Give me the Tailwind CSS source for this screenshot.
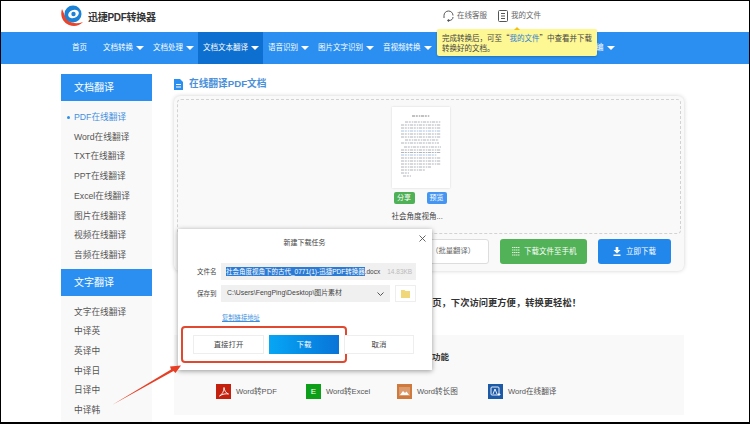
<!doctype html>
<html>
<head>
    <meta charset="UTF-8" />
    <title>迅捷PDF转换器</title>
    <script src="https://cdn.jsdelivr.net/npm/@tailwindcss/browser@4"></script>
</head>
<body class="bg-black">
<div class="relative w-[750px] h-[424px] overflow-hidden font-['Liberation_Sans','Noto_Sans_CJK_SC',sans-serif]">
<div class="absolute inset-0 border-t border-l border-r border-b-2 border-black z-50 pointer-events-none"></div>
<div class="w-[750px] h-[424px] bg-white overflow-hidden">
    <!-- header -->
    <header class="h-8 flex items-center text-[7.500px] text-[#666]">
        <svg class="ml-[61px] w-[22px] h-[22px]" viewBox="0 0 22 22">
            <path d="M1 4C-1 10 1 17 8 20c5 2 10 1 14-3-5 2-11 2-15-2C4 12 3 8 1 4z" fill="#e8452c"/>
            <circle cx="12" cy="9" r="8.500" fill="#1c82d6"/>
            <ellipse cx="12.500" cy="9" rx="5.500" ry="4" fill="#fff" transform="rotate(-20 12.500 9)"/>
            <circle cx="12.500" cy="9" r="2.200" fill="#1c82d6"/>
        </svg>
        <span class="ml-[5px] mt-[2px] w-[67px] whitespace-nowrap text-[10px] font-bold text-[#333] tracking-[-0.3px]">迅捷PDF转换器</span>
        <svg class="ml-[288px] w-[11px] h-[12px]" viewBox="0 0 11 12" fill="none" stroke="#555" stroke-width="1">
            <path d="M1 8V5.500a4.500 4.500 0 0 1 9 0M10 7c0 2-1.500 3.500-4 3.500"/>
            <circle cx="5.500" cy="10.500" r=".8" fill="#555"/>
        </svg>
        <span class="ml-[3px]">在线客服</span>
        <svg class="ml-[11px] w-[10px] h-[12px]" viewBox="0 0 10 12" fill="none" stroke="#555" stroke-width="1">
            <rect x=".5" y=".5" width="9" height="11" rx="1"/>
            <path d="M3 3.500h4M3 6h4M3 8.500h4"/>
        </svg>
        <span class="ml-[3px]">我的文件</span>
    </header>

    <!-- nav -->
    <nav class="h-8 bg-[#2a8ff0] flex items-stretch pl-[61px] text-[7.500px] text-white">
        <a class="w-[37px] flex items-center justify-center">首页</a>
        <a class="w-[50px] flex items-center pl-[5px] gap-[3px]">文档转换<i class="w-0 h-0 border-x-[4px] border-x-transparent border-t-[4px] border-t-white"></i></a>
        <a class="w-[50px] flex items-center pl-[5px] gap-[3px]">文档处理<i class="w-0 h-0 border-x-[4px] border-x-transparent border-t-[4px] border-t-white"></i></a>
        <a class="w-[65px] flex items-center pl-[5px] gap-[3px] bg-[#0d6fcf]">文档文本翻译<i class="w-0 h-0 border-x-[4px] border-x-transparent border-t-[4px] border-t-white"></i></a>
        <a class="w-[50px] flex items-center pl-[5px] gap-[3px]">语音识别<i class="w-0 h-0 border-x-[4px] border-x-transparent border-t-[4px] border-t-white"></i></a>
        <a class="w-[65px] flex items-center pl-[5px] gap-[3px]">图片文字识别<i class="w-0 h-0 border-x-[4px] border-x-transparent border-t-[4px] border-t-white"></i></a>
        <a class="w-[62px] flex items-center pl-[5px] gap-[3px]">音视频转换<i class="w-0 h-0 border-x-[4px] border-x-transparent border-t-[4px] border-t-white"></i></a>
        <a class="ml-[156px] flex items-center gap-[3px]">编<i class="w-0 h-0 border-x-[4px] border-x-transparent border-t-[4px] border-t-white"></i></a>
    </nav>

    <!-- body -->
    <main class="flex pl-[61px] pt-[10px]">
        <aside class="w-[91px] h-[350px] bg-[#f9f9f9] text-[8.700px] text-[#555]">
            <div class="h-[27px] bg-[#2a8ff0] text-white text-[10px] flex items-center pl-[13px]">文档翻译</div>
            <ul class="pt-[7px] pl-[13px] leading-[19.700px]">
                <li class="relative text-[#3f8fe0] before:content-[''] before:absolute before:-left-[7px] before:top-[8px] before:w-[3px] before:h-[3px] before:rounded-full before:bg-[#2a8ff0]">PDF在线翻译</li>
                <li>Word在线翻译</li>
                <li>TXT在线翻译</li>
                <li>PPT在线翻译</li>
                <li>Excel在线翻译</li>
                <li>图片在线翻译</li>
                <li>视频在线翻译</li>
                <li>音频在线翻译</li>
            </ul>
            <div class="mt-[3px] h-[27px] bg-[#2a8ff0] text-white text-[10px] flex items-center pl-[13px]">文字翻译</div>
            <ul class="pt-[7px] pl-[13px] leading-[19.700px]">
                <li>文字在线翻译</li>
                <li>中译英</li>
                <li>英译中</li>
                <li>中译日</li>
                <li>日译中</li>
                <li>中译韩</li>
            </ul>
        </aside>

        <section class="ml-[22px] w-[510px]">
            <h2 class="h-[22px] -mt-[1px] flex items-center text-[9.700px] font-bold text-[#4a90d9]">
                <svg class="w-[9px] h-[11px] mr-[6px]" viewBox="0 0 9 11"><path d="M0 0h6l3 3v8H0z" fill="#2a8ff0"/><path d="M2 5.500h5M2 8h5" stroke="#fff"/></svg>
                在线翻译PDF文档
            </h2>
            <div class="mt-[1px] h-[175px] bg-[#f9f9f9] rounded-md shadow-[0_0_4px_rgba(0,0,0,0.18)] p-[3px] flex flex-col">
                <div class="h-[135px] border border-dashed border-[#d2d2d2] rounded-sm flex flex-col items-center pt-[7px] pr-[17px]">
                    <div class="w-[58px] h-[81px] bg-white shadow-[0_0_2px_rgba(0,0,0,0.15)] px-[9px] pt-[8px]">
                        <svg class="w-[40px] h-[62px]" viewBox="0 0 40 62" stroke-width=".8" fill="none" stroke-dasharray="3 .8 2 1 1.500 .7">
                            <path d="M11 1h18" stroke="#666"/>
                            <path d="M4 7h36M0 10h40M0 13h40M0 19h40M0 22h40M4 25h34M0 28h38" stroke="#9aa0a8"/>
                            <path d="M0 16h40M0 40h36" stroke="#8fb0d8"/>
                            <path d="M3 32h37M0 35h40M0 37.500h40M0 43h40M0 46h40M0 49h40M0 52h30M0 55h24M0 58h8M2 61h8" stroke="#9aa0a8"/>
                        </svg>
                    </div>
                    <div class="w-[58px] mt-[4px] pl-[2px] flex gap-[12px] text-[7px] text-white">
                        <span class="w-[21px] h-[12px] leading-[12px] text-center bg-[#4fb155] rounded-[2px]">分享</span>
                        <span class="w-[20px] h-[12px] leading-[12px] text-center bg-[#4596f2] rounded-[2px]">预览</span>
                    </div>
                    <div class="w-[58px] mt-[8px] whitespace-nowrap text-[7.500px] leading-[10px] text-[#444]">社会角度视角...</div>
                </div>
                <div class="mt-[5px] flex justify-end gap-[11px] pr-[10px] text-[7.500px]">
                    <span class="w-[89px] h-[25px] bg-white border border-[#ddd] rounded-[3px] text-[#666] text-[7.300px] flex items-center justify-end pr-[13px]">（批量翻译）</span>
                    <span class="w-[87px] h-[25px] bg-[#52b257] rounded-[3px] text-white flex items-center pl-[12px] gap-[4px]">
                        <svg class="w-[8px] h-[9px]" viewBox="0 0 8 9" fill="none" stroke="#dff0df"><path d="M0 .5h8M0 3h8M0 5.500h8M0 8h8" stroke-dasharray="1.500 .5"/></svg>
                        下载文件至手机
                    </span>
                    <span class="w-[73px] h-[25px] bg-[#2287ea] rounded-[3px] text-white flex items-center pl-[15px] gap-[5px]">
                        <svg class="w-[8px] h-[9px]" viewBox="0 0 8 9" fill="#fff"><path d="M2.700 0h2.600v3h2.200L4 6.500.5 3h2.200zM.5 7.500h7V9h-7z"/></svg>
                        立即下载
                    </span>
                </div>
            </div>
            <p class="mt-[24px] text-right pr-[103px] text-[9.300px] font-bold text-[#333] leading-[16px]">页，下次访问更方便，转换更轻松！</p>
            <div class="mt-[24px] h-[80px] bg-[#f9f9f9]">
                <div class="pt-[14px] pl-[258px] text-[8.500px] font-bold text-[#333] leading-[16px]">功能</div>
                <div class="mt-[19px] flex items-center pl-[42px] text-[7.600px] text-[#555]">
                    <span class="w-[90px] flex items-center gap-[5px]">
                        <i class="w-[15px] h-[15px] bg-[#c3200d] flex items-center justify-center">
                            <svg class="w-[10px] h-[10px]" viewBox="0 0 10 10" fill="none" stroke="#fff" stroke-width=".9"><path d="M5 .5c0 4-2 7-4.500 8.500 3-2 6-2.500 9-2-2.500-1-4-3-4.500-6.500z"/></svg>
                        </i>Word转PDF</span>
                    <span class="w-[91px] flex items-center gap-[5px]">
                        <i class="w-[15px] h-[15px] bg-[#0c9f17] text-white not-italic text-[8px] flex items-center justify-center">E</i>Word转Excel</span>
                    <span class="w-[91px] flex items-center gap-[5px]">
                        <i class="w-[15px] h-[15px] bg-[#cf7a3c] flex items-center justify-center">
                            <svg class="w-[11px] h-[9px]" viewBox="0 0 11 9" fill="#fff"><path d="M0 0h11v9H0z" fill-opacity=".25"/><path d="M1 8l3-4 2 2 1.500-1.500L10 8z"/></svg>
                        </i>Word转长图</span>
                    <span class="flex items-center gap-[5px]">
                        <i class="w-[15px] h-[15px] bg-[#1c5aa8] flex items-center justify-center">
                            <svg class="w-[11px] h-[11px]" viewBox="0 0 11 11" fill="none" stroke="#fff" stroke-width=".9"><rect x="1" y="1" width="8" height="8" rx="1"/><path d="M3 8l2-5 2 5M9 7v3M7.500 8.500h3"/></svg>
                        </i>Word在线翻译</span>
                </div>
            </div>
        </section>
    </main>
</div>

<!-- tooltip -->
<div class="absolute left-[437px] top-[29px] w-[160px] h-[27px] bg-[#fdf794] rounded-[2px] shadow-[0_1px_2px_rgba(0,0,0,0.2)] pl-[5px] pt-[4px] text-[7.500px] leading-[10px] text-[#444] whitespace-nowrap font-['Noto_Sans_CJK_SC',sans-serif]">
    <i class="absolute left-[77px] -top-[2px] w-0 h-0 border-x-[3px] border-x-transparent border-b-[3px] border-b-[#f4c20d]"></i>
    完成转换后，可至“<span class="text-[#2f80d8]">我的文件</span>”中查看并下载<br>转换好的文档。
</div>

<!-- download dialog -->
<div class="absolute left-[178px] top-[229px] w-[254px] h-[141px] bg-white shadow-[0_1px_5px_rgba(0,0,0,0.4)] text-[6.500px] text-[#444]">
    <div class="h-[29px] flex items-center justify-center pr-[1px] text-[7px]">新建下载任务</div>
    <svg class="absolute right-[6px] top-[6px] w-[7px] h-[7px]" viewBox="0 0 7 7" stroke="#555" stroke-width=".9"><path d="M.5.5l6 6M6.500.5l-6 6"/></svg>
    <div class="mt-[5px] ml-[19px] flex items-center h-[17px]">
        <span class="w-[24px]">文件名</span>
        <div class="w-[195px] h-[17px] bg-[#f0f0f0] flex items-center pl-[5px] whitespace-nowrap overflow-hidden">
            <span class="bg-[#2b7bd4] text-white">社会角度视角下的古代_0771(1)-迅捷PDF转换器</span><span>.docx</span>
            <span class="ml-[7px] text-[#bbb]">14.83KB</span>
        </div>
    </div>
    <div class="mt-[5px] ml-[19px] flex items-center h-[17px]">
        <span class="w-[24px]">保存到</span>
        <div class="w-[169px] h-[17px] bg-[#f0f0f0] flex items-center pl-[6px] pr-[6px] justify-between text-[6.900px]">
            C:\Users\FengPing\Desktop\图片素材
            <svg class="w-[7px] h-[4px]" viewBox="0 0 7 4" fill="none" stroke="#555"><path d="M.5.5l3 3 3-3"/></svg>
        </div>
        <div class="ml-[5px] w-[21px] h-[17px] border border-[#eee] flex items-center justify-center">
            <svg class="w-[9px] h-[8px]" viewBox="0 0 9 8"><path d="M0 0h3.500l1 1H9v7H0z" fill="#f0d77a"/></svg>
        </div>
    </div>
    <a class="block mt-[11px] ml-[44px] h-[10px] leading-[10px] text-[6.300px] text-[#3d8fdd] underline">复制链接地址</a>
    <div class="absolute left-[3px] top-[97px] w-[166px] h-[37px] border-2 border-[#e0492f] rounded-[4px]"></div>
    <div class="absolute left-[15px] right-[17px] top-[106px] flex gap-[5px] text-[7.400px]">
        <button class="w-[71px] h-[19px] border border-[#eee] bg-white">直接打开</button>
        <button class="w-[70px] h-[19px] bg-linear-to-r from-[#08a6f5] to-[#0a74d8] text-white">下载</button>
        <button class="w-[70px] h-[19px] border border-[#eee] bg-white">取消</button>
    </div>
</div>

<!-- annotation arrow -->
<svg class="absolute left-[108px] top-[360px] w-[76px] h-[50px]" viewBox="0 0 76 50">
    <path d="M4 45L63 9.500 62 6.500 73 5.500 67.500 13 65.500 11z" fill="#e63f25"/>
</svg>
</div>
</body>
</html>
